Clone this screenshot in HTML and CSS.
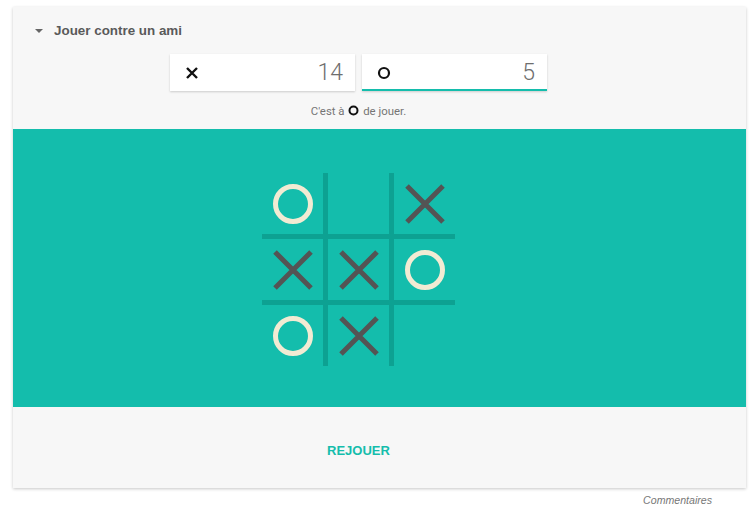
FILE: index.html
```html
<!DOCTYPE html>
<html lang="fr">
<head>
    <meta charset="UTF-8">
    <meta name="viewport" content="width=device-width, initial-scale=1.0">
    <title>Morpion</title>
    <link rel="stylesheet" href="styles.css">
</head>
<body>
    <div class="card">
        <div class="head">
            <span class="caret"></span>
            <span class="mode">Jouer contre un ami</span>
        </div>

        <div class="scores centered">
            <div class="score">
                <svg class="mark" width="14" height="14" viewBox="0 0 14 14">
                    <path d="M2 2 L12 12 M12 2 L2 12" stroke="#111" stroke-width="2.4" fill="none"/>
                </svg>
                <span class="points">14</span>
            </div>
            <div class="score active">
                <svg class="mark" width="14" height="14" viewBox="0 0 14 14">
                    <circle cx="7" cy="7" r="5" stroke="#111" stroke-width="2.2" fill="none"/>
                </svg>
                <span class="points">5</span>
            </div>
        </div>

        <p class="status centered">
            C'est à
            <svg class="turn" width="11" height="11" viewBox="0 0 11 11">
                <circle cx="5.5" cy="5.5" r="4" stroke="#111" stroke-width="2" fill="none"/>
            </svg>
            de jouer.
        </p>

        <div class="field">
            <div class="board">
                <div class="cell"><svg width="44" height="44" viewBox="0 0 44 44"><circle cx="22" cy="22" r="17.5" class="o"/></svg></div>
                <div class="cell"></div>
                <div class="cell"><svg width="44" height="44" viewBox="0 0 44 44"><path d="M4 4 L40 40 M40 4 L4 40" class="x"/></svg></div>

                <div class="cell"><svg width="44" height="44" viewBox="0 0 44 44"><path d="M4 4 L40 40 M40 4 L4 40" class="x"/></svg></div>
                <div class="cell"><svg width="44" height="44" viewBox="0 0 44 44"><path d="M4 4 L40 40 M40 4 L4 40" class="x"/></svg></div>
                <div class="cell"><svg width="44" height="44" viewBox="0 0 44 44"><circle cx="22" cy="22" r="17.5" class="o"/></svg></div>

                <div class="cell"><svg width="44" height="44" viewBox="0 0 44 44"><circle cx="22" cy="22" r="17.5" class="o"/></svg></div>
                <div class="cell"><svg width="44" height="44" viewBox="0 0 44 44"><path d="M4 4 L40 40 M40 4 L4 40" class="x"/></svg></div>
                <div class="cell"></div>
            </div>
        </div>

        <div class="footer centered">
            <button class="replay">REJOUER</button>
        </div>
    </div>

    <div class="feedback">Commentaires</div>
</body>
</html>
```

FILE: styles.css
```css
body {
    margin: 0;
    padding: 0;
    background: #fff;
    font-family: "Liberation Sans", Arial, sans-serif;
    color: #555;
}

.card {
    margin: 7px 9px 0 13px;
    background-color: #f7f7f7;
    box-shadow: 0 1px 3px rgba(0, 0, 0, 0.22);
}

.centered {
    padding-right: 42px;
}

.head {
    display: flex;
    align-items: center;
    padding: 16px 22px 0;
    height: 16px;
}

.caret {
    width: 0;
    height: 0;
    border-left: 4px solid transparent;
    border-right: 4px solid transparent;
    border-top: 4px solid #666;
    margin-right: 11px;
}

.mode {
    font-size: 13.4px;
    font-weight: bold;
    color: #5a5a5a;
    line-height: 16px;
}

.scores {
    display: flex;
    justify-content: center;
    gap: 7px;
    margin-top: 15px;
}

.score {
    width: 185px;
    height: 37px;
    box-sizing: border-box;
    display: flex;
    align-items: center;
    justify-content: space-between;
    padding: 0 12px 0 15px;
    background-color: #fff;
    box-shadow: 0 1px 2px rgba(0, 0, 0, 0.18);
}

.score.active {
    border-bottom: 2px solid #14bdac;
    padding-top: 2px;
}

.points {
    font-family: Roboto, "Liberation Sans", sans-serif;
    font-weight: 300;
    font-size: 23px;
    color: #6e6e6e;
}

.status {
    margin: 13px 0 11px;
    text-align: center;
    font-family: Roboto, "Liberation Sans", sans-serif;
    font-size: 11.4px;
    line-height: 14px;
    color: #757575;
}

.turn {
    vertical-align: -1px;
    margin: 0 1px;
}

.field {
    background-color: #14bdac;
    padding: 44px 0 41px;
}

.board {
    display: grid;
    grid-template-columns: repeat(3, 61px);
    grid-template-rows: repeat(3, 61px);
    gap: 5px;
    width: 193px;
    margin: 0 auto;
    position: relative;
    left: -21px;
    background-color: #0da192;
}

.cell {
    background-color: #14bdac;
    display: flex;
    align-items: center;
    justify-content: center;
}

.o {
    fill: none;
    stroke: #f2ebd3;
    stroke-width: 5;
}

.x {
    fill: none;
    stroke: #545454;
    stroke-width: 5;
}

.footer {
    text-align: center;
    padding-top: 34px;
    padding-bottom: 28px;
}

.replay {
    background: none;
    border: none;
    padding: 0;
    font-family: "Liberation Sans", Arial, sans-serif;
    font-size: 13px;
    font-weight: bold;
    line-height: 18px;
    color: #14bdac;
    cursor: pointer;
}

.feedback {
    text-align: right;
    padding: 6px 43px 0 0;
    font-size: 10.6px;
    font-style: italic;
    color: #777;
}
```
